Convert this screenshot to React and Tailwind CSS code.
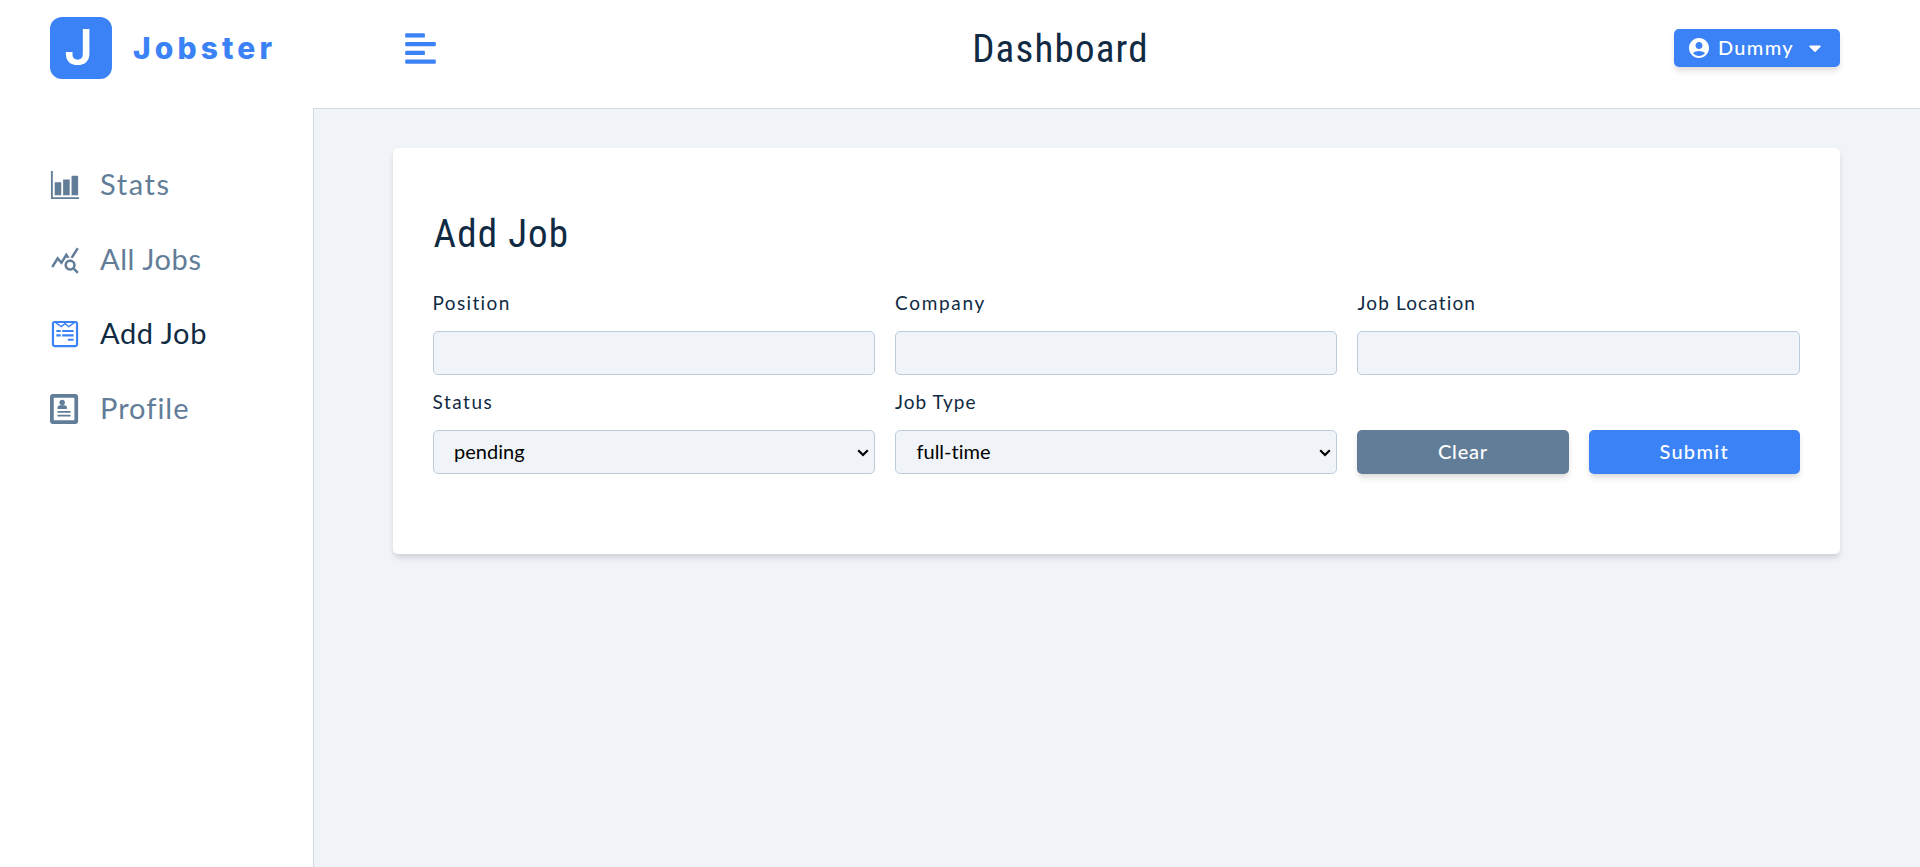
import { FaAlignLeft, FaCaretDown, FaWpforms } from "react-icons/fa";
import { IoBarChartSharp } from "react-icons/io5";
import { MdAccountCircle, MdQueryStats } from "react-icons/md";
import { ImProfile } from "react-icons/im";

const links = [
  { label: "Stats", Icon: IoBarChartSharp, spacing: "tracking-[1.6px]" },
  { label: "All Jobs", Icon: MdQueryStats, spacing: "tracking-[0.6px]" },
  { label: "Add Job", Icon: FaWpforms, spacing: "tracking-[0.6px]", active: true },
  { label: "Profile", Icon: ImProfile, spacing: "tracking-[1px]" },
];

const shadow =
  "shadow-[0_5px_7.5px_-1.25px_rgba(0,0,0,0.1),0_2.5px_5px_-1.25px_rgba(0,0,0,0.06)]";
const heading =
  "block whitespace-nowrap font-['Roboto'] text-[39px] leading-[50px] font-normal text-[#102a43] [font-stretch:75%]";
const control =
  "h-11 w-full rounded-[5px] border border-[#bcccdc] bg-[#f0f4f8]";

function Sidebar() {
  return (
    <aside className="flex h-full w-[313px] shrink-0 flex-col bg-white">
      <header className="flex h-24 items-center pl-[50px]">
        <div className="flex size-[62px] items-center justify-center rounded-[12px] bg-[#3b82f6] pr-[5px] pb-[3px] font-['Inter'] text-[50px] leading-none font-semibold text-white">
          J
        </div>
        <span className="ml-[21px] font-['Inter'] text-[30px] leading-none font-extrabold tracking-[4.1px] text-[#3b82f6]">
          Jobster
        </span>
      </header>
      <nav className="flex flex-col pt-[52px]">
        {links.map(({ label, Icon, spacing, active }) => (
          <a
            key={label}
            className={`flex h-[74.5px] items-center gap-5 pl-[50px] text-[29px] ${spacing} ${
              active ? "text-[#102a43]" : "text-[#627d98]"
            }`}
          >
            <Icon className={`size-[30px] ${active ? "text-[#3b82f6]" : ""}`} />
            <span className="pb-[3px]">{label}</span>
          </a>
        ))}
      </nav>
    </aside>
  );
}

function Navbar() {
  return (
    <header className="flex h-[109px] shrink-0 items-start justify-between border-b border-[#d6dade] bg-white pr-20 pl-[90px]">
      <button className="mt-[31px] flex text-[#3b82f6]">
        <FaAlignLeft className="size-[35px]" />
      </button>
      <h2 className={`${heading} mt-6 ml-[9px] tracking-[1.2px]`}>Dashboard</h2>
      <button
        className={`mt-[29px] flex h-[38px] w-[166px] items-center rounded-[5px] bg-[#3b82f6] pl-[13px] text-[20px] font-medium tracking-[1.3px] text-white ${shadow}`}
      >
        <MdAccountCircle className="size-6" />
        <span className="ml-[7px] w-[78px] pb-[2px] text-left">Dummy</span>
        <FaCaretDown className="ml-[9px] size-5" />
      </button>
    </header>
  );
}

function Field({ label, spacing, children }) {
  return (
    <label className="flex flex-col">
      <span
        className={`mb-4 h-[25px] text-[19px] leading-[25px] text-[#102a43] ${spacing}`}
      >
        {label}
      </span>
      {children}
    </label>
  );
}

function Select({ value }) {
  return (
    <div className="relative">
      <select
        className={`${control} block appearance-none px-[20.5px] pb-[2px] text-[20px] text-black [font-variant-ligatures:none]`}
        defaultValue={value}
      >
        <option>{value}</option>
      </select>
      <svg
        viewBox="0 0 12 8"
        className="pointer-events-none absolute top-[19px] right-[6px] h-2 w-3 fill-none stroke-black"
      >
        <path d="M1.2 1.2 6 6l4.800-4.800" strokeWidth="2.2" />
      </svg>
    </div>
  );
}

function JobForm() {
  return (
    <section
      className={`h-[406px] w-[1447.2px] rounded-[5px] bg-white px-10 pt-[61px] ${shadow}`}
    >
      <h3 className={`${heading} pl-px tracking-[1.1px]`}>Add Job</h3>
      <form className="mt-[31px] grid grid-cols-3 gap-x-5 gap-y-[14px]">
        <Field label="Position" spacing="tracking-[1.35px]">
          <input className={control} />
        </Field>
        <Field label="Company" spacing="tracking-[1.7px]">
          <input className={control} />
        </Field>
        <Field label="Job Location" spacing="tracking-[1.15px]">
          <input className={control} />
        </Field>
        <Field label="Status" spacing="tracking-[1.5px]">
          <Select value="pending" />
        </Field>
        <Field label="Job Type" spacing="tracking-[1px]">
          <Select value="full-time" />
        </Field>
        <div className="grid grid-cols-2 gap-5 self-end text-[20px] font-medium text-white">
          <button
            type="button"
            className={`h-11 rounded-[5px] bg-[#627d98] pb-[2px] tracking-[0.8px] ${shadow}`}
          >
            Clear
          </button>
          <button
            type="button"
            className={`h-11 rounded-[5px] bg-[#3b82f6] pb-[2px] tracking-[1.3px] ${shadow}`}
          >
            Submit
          </button>
        </div>
      </form>
    </section>
  );
}

export default function App() {
  return (
    <div className="flex h-[867px] w-full overflow-hidden bg-[#f0f4f8] font-['Lato',sans-serif]">
      <Sidebar />
      <main className="flex min-w-0 flex-1 flex-col">
        <Navbar />
        <div className="flex-1 border-l border-[#d3dbe3] pt-[39px] pl-[78.6px]">
          <JobForm />
        </div>
      </main>
    </div>
  );
}
